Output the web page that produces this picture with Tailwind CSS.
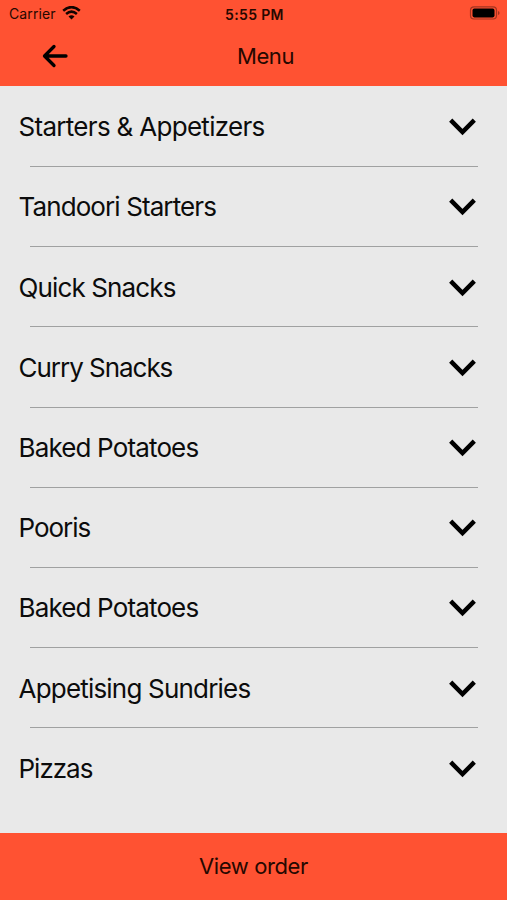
<!DOCTYPE html>
<html lang="en">
<head>
<meta charset="utf-8">
<title>Menu</title>
<script src="https://cdn.jsdelivr.net/npm/@tailwindcss/browser@4"></script>
</head>
<body class="bg-[#e9e9e9]">
<div class="flex h-[900px] w-[507px] flex-col overflow-hidden bg-[#e9e9e9] font-['Inter',sans-serif] text-[#0c0c0c]">
  <header class="h-[86px] shrink-0 bg-[#ff5232] text-[#260800]">
    <div class="grid h-7 grid-cols-3 items-center pl-[9px] pr-[7px]">
      <div class="flex items-center gap-[6px]">
        <span class="-mt-[2px] text-[14px] tracking-[0.1px]">Carrier</span>
        <svg class="-mt-[2px] h-[14px] w-[19px]" viewBox="0 0 19 14" fill="none" stroke="#120400" stroke-width="2.5">
          <path d="M1.2 4.8Q9.5-2.6 17.8 4.8M4.1 8Q9.5 3.2 14.9 8"/>
          <path d="M6.5 10.5Q9.5 8 12.5 10.5L9.5 13.5Z" fill="#120400" stroke="none"/>
        </svg>
      </div>
      <div class="text-center text-[14px] font-semibold tracking-[0.35px] whitespace-nowrap">5:55 PM</div>
      <svg class="-mt-[2px] h-[14px] w-[31px] justify-self-end" viewBox="0 0 31 14">
        <rect x="1.500" y=".8" width="26" height="12.2" rx="3.5" fill="none" stroke="#a33420" stroke-width="1.2"/>
        <rect x="3.500" y="2.6" width="22" height="8.8" rx="1.8" fill="#000"/>
        <path d="M29 5v4Q30.6 8.400 30.600 7T29 5" fill="#a33420"/>
      </svg>
    </div>
    <div class="grid h-[56px] grid-cols-3 items-center">
      <svg class="ml-[42px] h-[24px] w-[27px]" viewBox="0 0 27 24" fill="none" stroke="#000" stroke-width="3.3" stroke-linecap="round" stroke-linejoin="round">
        <path d="M24 12H3M12 2.500L2.500 12L12 21.500"/>
      </svg>
      <h1 class="pl-[24px] text-center text-[22px] leading-7 tracking-[-0.4px]">Menu</h1>
    </div>
  </header>
  <main id="menu" class="min-h-0 flex-1 pl-[18px] pr-[29px] pt-[0.9px] text-[26px]"></main>
  <footer class="flex h-[67px] shrink-0 items-center justify-center bg-[#ff5232] text-[22px] text-[#260800]">
    <span class="tracking-[-0.4px]">View order</span>
  </footer>
</div>
<script>
  const items = [
    ['Starters & Appetizers', 'tracking-[-0.7px]'],
    ['Tandoori Starters', 'tracking-[-0.9px]'],
    ['Quick Snacks', 'tracking-[-0.87px]'],
    ['Curry Snacks', 'tracking-[-1.03px]'],
    ['Baked Potatoes', 'tracking-[-0.85px]'],
    ['Pooris', 'tracking-[-1.02px]'],
    ['Baked Potatoes', 'tracking-[-0.85px]'],
    ['Appetising Sundries', 'tracking-[-0.8px]'],
    ['Pizzas', 'tracking-[-1px]']
  ];
  const menu = document.getElementById('menu');
  items.forEach(([name, tracking], i) => {
    const row = document.createElement('section');
    row.className = 'h-[80.2px]';
    row.innerHTML = `
      <button class="flex h-[79.2px] w-full items-center justify-between pr-[2px] pt-[0.5px]">
        <span class="whitespace-nowrap pl-[0.5px] ${tracking}"></span>
        <svg class="mt-[1px] h-[18px] w-[27px]" viewBox="0 0 27 18" fill="none" stroke="#000" stroke-width="4.5"><path d="M1.700 2.200L13.500 14L25.300 2.200"/></svg>
      </button>
      ${i < items.length - 1 ? '<div class="ml-[12px] h-px bg-[#a0a1a1]"></div>' : ''}`;
    row.querySelector('span').textContent = name;
    menu.append(row);
  });
</script>
</body>
</html>
